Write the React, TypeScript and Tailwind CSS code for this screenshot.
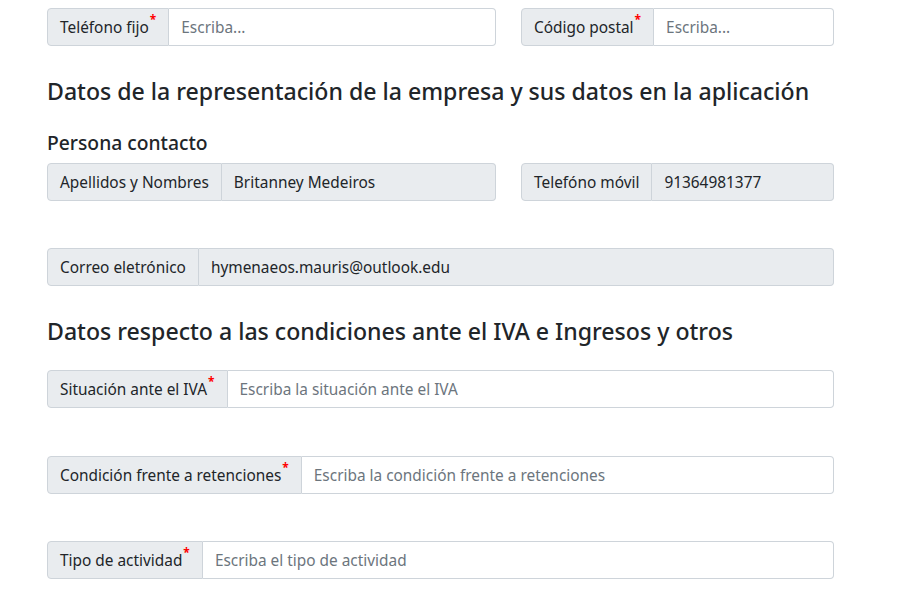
import React from 'react';

// Input group: grey addon label + text field
const Field = ({ label, required = false, placeholder = '', value = '', readOnly = false }) => (
  <div className="flex h-[38px] w-full">
    <span className="flex items-center whitespace-nowrap px-3 pt-[1px] bg-[#e9ecef] border border-[#ced4da] rounded-l-[4px] text-[15.4px] text-[#212529]">
      {label}
      {required && <sup className="text-[#ff0000] text-[12px] font-bold -mt-1 ml-[1px]">*</sup>}
    </span>
    <input
      className={`flex-1 min-w-0 px-3 pt-[1px] border border-l-0 border-[#ced4da] rounded-r-[4px] text-[15.4px] text-[#212529] placeholder:text-[#6c757d] outline-none ${readOnly ? 'bg-[#e9ecef]' : 'bg-white'}`}
      placeholder={placeholder}
      defaultValue={value}
      readOnly={readOnly}
    />
  </div>
);

export default function App() {
  return (
    <div className="min-h-screen bg-white font-['Noto_Sans',sans-serif] text-[#212529]">
      <div className="w-[787px] ml-[47px] pt-2">
        {/* Fila de contacto */}
        <div className="flex gap-[25px]">
          <div className="w-[449px]">
            <Field label="Teléfono fijo" required placeholder="Escriba..." />
          </div>
          <div className="w-[313px]">
            <Field label="Código postal" required placeholder="Escriba..." />
          </div>
        </div>

        <h4 className="mt-[31px] text-[23.1px] leading-[29px] font-medium whitespace-nowrap">
          Datos de la representación de la empresa y sus datos en la aplicación
        </h4>

        <h5 className="mt-[25px] text-[19.3px] leading-6 font-medium">Persona contacto</h5>

        <div className="flex gap-[25px] mt-2">
          <div className="w-[449px]">
            <Field label="Apellidos y Nombres" value="Britanney Medeiros" readOnly />
          </div>
          <div className="w-[313px]">
            <Field label="Telefóno móvil" value="91364981377" readOnly />
          </div>
        </div>

        <div className="mt-[47px]">
          <Field label="Correo eletrónico" value="hymenaeos.mauris@outlook.edu" readOnly />
        </div>

        <h4 className="mt-[31px] text-[23.1px] leading-[29px] font-medium whitespace-nowrap">
          Datos respecto a las condiciones ante el IVA e Ingresos y otros
        </h4>

        <div className="mt-6">
          <Field label="Situación ante el IVA" required placeholder="Escriba la situación ante el IVA" />
        </div>
        <div className="mt-[48px]">
          <Field label="Condición frente a retenciones" required placeholder="Escriba la condición frente a retenciones" />
        </div>
        <div className="mt-[47px]">
          <Field label="Tipo de actividad" required placeholder="Escriba el tipo de actividad" />
        </div>
      </div>
    </div>
  );
}
